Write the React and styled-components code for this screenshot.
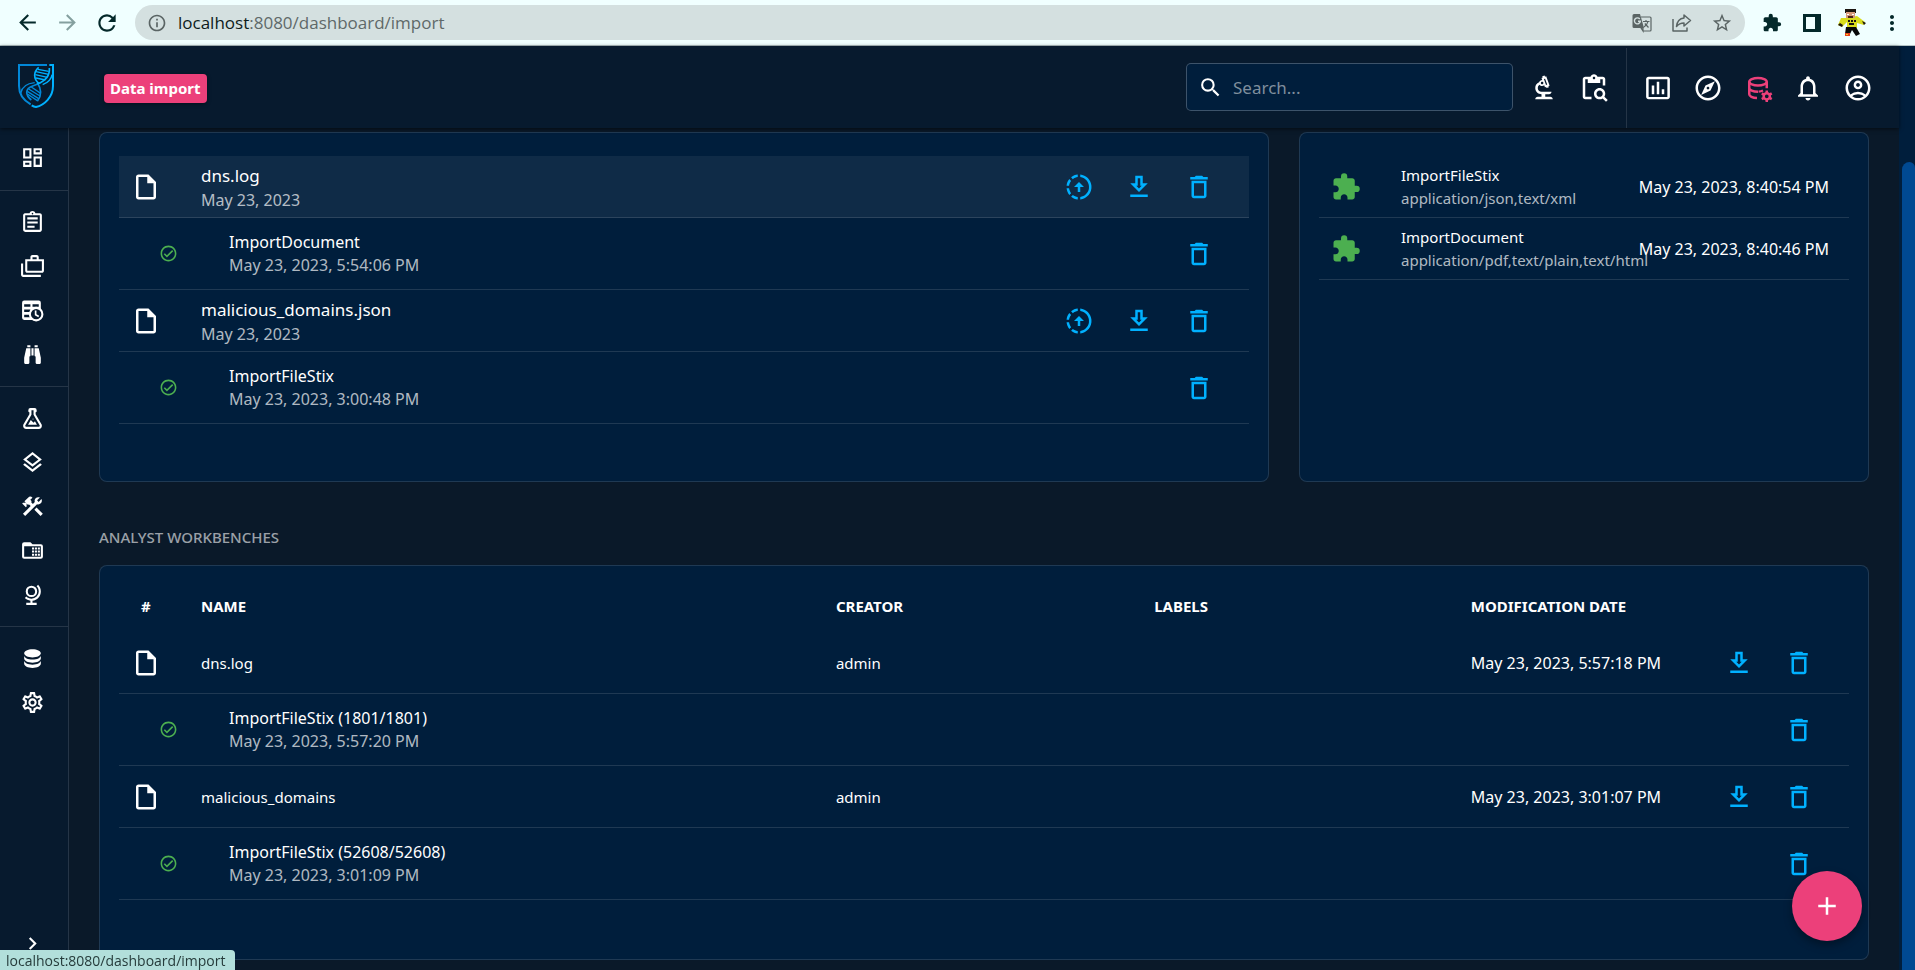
import React from 'react';
import styled, { createGlobalStyle, css } from 'styled-components';
import {
  MdArrowBack, MdArrowForward, MdRefresh, MdInfoOutline, MdStarOutline, MdExtension, MdMoreVert,
  MdSearch, MdOutlineBiotech, MdOutlineContentPasteSearch, MdInsertChartOutlined, MdOutlineExplore,
  MdNotificationsNone, MdOutlineAccountCircle, MdOutlineDashboard, MdOutlineAssignment, MdOutlineCases,
  MdOutlineLayers, MdConstruction, MdOutlineSettings, MdChevronRight, MdOutlineInsertDriveFile,
  MdDeleteOutline, MdOutlineGetApp, MdAdd,
} from 'react-icons/md';

const color = {
  page: '#0a1929',
  nav: '#071a2e',
  paper: '#001e3c',
  line: 'rgba(255, 255, 255, 0.12)',
  blue: '#00b1ff',
  pink: '#ec407a',
  green: '#4caf50',
  muted: 'rgba(255, 255, 255, 0.7)',
};

const GlobalStyle = createGlobalStyle`
  *, *::before, *::after { box-sizing: border-box; }
  body {
    margin: 0;
    background: ${color.page};
    color: #fff;
    font: 16px/24px "Noto Sans", "Open Sans", sans-serif;
  }
  button { padding: 0; border: 0; background: none; color: inherit; font: inherit; cursor: pointer; }
  h1, h2, p, ul { margin: 0; padding: 0; }
  ul { list-style: none; }
  svg { display: block; flex: none; }
`;

/* ---------- browser frame ---------- */

const Window = styled.div`
  display: flex;
  flex-direction: column;
  height: 100vh;
  overflow: hidden;
`;

const BrowserBar = styled.div`
  display: flex;
  align-items: center;
  flex: none;
  height: 46px;
  padding: 0 3px 0 11px;
  background: #f0ffff;
  border-bottom: 1px solid #b4c4c6;
  color: #04292a;
`;

const BrowserNav = styled.div`
  display: flex;
  gap: 8px;
  margin-right: 12px;
`;

const BrowserButton = styled.button`
  display: flex;
  align-items: center;
  justify-content: center;
  width: ${(p) => (p.$wide ? 40 : 32)}px;
  height: 32px;
  color: ${(p) => (p.$faded ? '#84a09f' : 'inherit')};
`;

const AddressBar = styled.div`
  display: flex;
  align-items: center;
  flex: 1;
  height: 35px;
  padding: 0 3px 0 12px;
  border-radius: 18px;
  background: #d4e0e0;
  color: #5a6464;
`;

const Address = styled.p`
  flex: 1;
  margin-left: 11px;
  color: #5f6969;
  font: 17px/24px "Open Sans", "Noto Sans", sans-serif;
  span { color: #0d1b1b; }
`;

const BrowserActions = styled.div`
  display: flex;
  margin-left: 7px;
`;

const Viewport = styled.div`
  display: flex;
  flex: 1;
  min-height: 0;
`;

const ScrollTrack = styled.div`
  flex: none;
  width: 16px;
  padding: 116px 0 0 3px;
  background: ${color.paper};
`;

const ScrollThumb = styled.div`
  height: 100%;
  border-radius: 8px 6px 0 0;
  background: #004991;
`;

const StatusBubble = styled.div`
  position: fixed;
  left: 0;
  bottom: 0;
  padding: 2px 10px 0 6px;
  border-radius: 0 4px 0 0;
  background: #b2dfdb;
  color: #263c3b;
  font: 14px/18px "Open Sans", "Noto Sans", sans-serif;
`;

/* ---------- application frame ---------- */

const AppFrame = styled.div`
  display: flex;
  flex-direction: column;
  flex: 1;
  min-width: 0;
`;

const TopBar = styled.header`
  position: relative;
  display: flex;
  align-items: center;
  flex: none;
  height: 82px;
  padding: 2px 16px 0 18px;
  background: ${color.nav};
  box-shadow: 0 1px 4px rgba(0, 0, 0, 0.6);
`;

const LogoLink = styled.a`
  display: block;
  margin: 0 50px 4px 0;
`;

const PageBadge = styled.h1`
  padding: 0 6px;
  border-radius: 4px;
  background: ${color.pink};
  box-shadow: 0 1px 4px rgba(0, 0, 0, 0.4);
  font-size: 15px;
  font-weight: 700;
  line-height: 29px;
`;

const SearchBox = styled.label`
  display: flex;
  align-items: center;
  gap: 10px;
  width: 327px;
  height: 48px;
  margin: 0 6px 2px auto;
  padding: 0 11px;
  border: 1px solid rgba(255, 255, 255, 0.24);
  border-radius: 5px;
  background: ${color.paper};
`;

const SearchInput = styled.input`
  flex: 1;
  min-width: 0;
  padding: 2px 0 0;
  border: 0;
  outline: 0;
  background: none;
  color: #fff;
  font: inherit;
  font-size: 17px;
  &::placeholder { color: #7f8e9d; opacity: 1; }
`;

const BarGroup = styled.nav`
  display: flex;
  align-items: center;
  align-self: stretch;
  ${(p) => p.$divided && css`
    margin-left: 7px;
    padding-left: 6px;
    border-left: 1px solid ${color.line};
  `}
`;

const BarButton = styled.button`
  display: flex;
  align-items: center;
  justify-content: center;
  width: 50px;
  height: 50px;
  color: ${(p) => (p.$active ? color.pink : '#fff')};
`;

const Body = styled.div`
  display: flex;
  flex: 1;
  min-height: 0;
`;

const SideBar = styled.nav`
  display: flex;
  flex-direction: column;
  flex: none;
  width: 69px;
  padding-bottom: 5px;
  border-right: 1px solid ${color.line};
  background: ${color.nav};
`;

const SideSection = styled.ul`
  padding: ${(p) => (p.$first ? '7px 0 11px' : '9px 0 10px')};
  &:not(:last-of-type) { border-bottom: 1px solid ${color.line}; }
`;

const SideButton = styled.button`
  display: flex;
  align-items: center;
  justify-content: center;
  width: 65px;
  height: 44px;
`;

const SideFooter = styled.div`
  margin-top: auto;
`;

/* ---------- content ---------- */

const Content = styled.main`
  flex: 1;
  min-width: 0;
  padding: 4px 30px 0;
  overflow: hidden;
`;

const Columns = styled.div`
  display: grid;
  grid-template-columns: repeat(12, minmax(0, 1fr));
  gap: 30px;
`;

const Card = styled.section`
  grid-column: span ${(p) => p.$span || 12};
  min-height: ${(p) => p.$minHeight}px;
  padding: ${(p) => p.$top}px 19px 0;
  border: 1px solid ${color.line};
  border-radius: 8px;
  background: ${color.paper};
`;

const SectionTitle = styled.h2`
  margin: 43px 0 16px;
  color: rgba(255, 255, 255, 0.6);
  font-size: 15px;
  font-weight: 500;
  line-height: 24px;
`;

const Row = styled.li`
  display: flex;
  align-items: center;
  height: ${(p) => (p.$nested ? 72 : 62)}px;
  padding: 0 20px 0 ${(p) => (p.$nested ? 40 : 12)}px;
  border-bottom: 1px solid ${color.line};
  background: ${(p) => (p.$selected ? 'rgba(255, 255, 255, 0.06)' : 'none')};
`;

const RowIcon = styled.span`
  flex: none;
  width: 70px;
  color: ${(p) => (p.$green ? color.green : '#fff')};
`;

const RowText = styled.div`
  flex: 1;
  min-width: 0;
  padding-top: ${(p) => (p.$large ? 2 : 0)}px;
  white-space: nowrap;
`;

const Title = styled.p`
  font-size: ${(p) => (p.$large ? 17 : p.$small ? 15 : 16)}px;
  line-height: ${(p) => (p.$large ? 24 : 23)}px;
`;

const Detail = styled.p`
  color: ${color.muted};
  font-size: ${(p) => (p.$small ? 15 : 16)}px;
  line-height: ${(p) => (p.$large ? 24 : 23)}px;
`;

const RowDate = styled.time`
  flex: none;
`;

const ActionButton = styled.button`
  display: flex;
  align-items: center;
  justify-content: center;
  width: 60px;
  height: 48px;
  color: ${color.blue};
`;

const Table = styled.table`
  width: 100%;
  border-collapse: separate;
  border-spacing: 0;
  table-layout: fixed;
`;

const HeadCell = styled.th`
  width: ${(p) => p.$width || 'auto'};
  height: 53px;
  padding: 0;
  font-size: 15px;
  font-weight: 700;
  text-align: left;
  white-space: nowrap;
  &:first-child { padding-left: 22px; }
`;

const TableRow = styled.tr`
  height: ${(p) => (p.$nested ? 72 : 62)}px;
`;

const Cell = styled.td`
  padding: 0 0 0 ${(p) => p.$indent || 0}px;
  border-bottom: 1px solid ${color.line};
  font-size: ${(p) => (p.$date ? 16 : 15)}px;
`;

const NestedEntry = styled.div`
  display: flex;
  align-items: center;
`;

const AddButton = styled.button`
  position: fixed;
  right: 53px;
  bottom: 29px;
  display: flex;
  align-items: center;
  justify-content: center;
  width: 70px;
  height: 70px;
  border-radius: 50%;
  background: ${color.pink};
  box-shadow: 0 4px 8px rgba(0, 0, 0, 0.35);
`;

/* ---------- drawings ---------- */

const Glyph = ({ size = 25, children }) => (
  <svg width={size} height={size} viewBox="0 0 24 24" fill="currentColor" aria-hidden="true">{children}</svg>
);

const Binoculars = () => (
  <Glyph><path d="M11,6H13V13H11V6M9,20A1,1 0 0,1 8,21H5A1,1 0 0,1 4,20V15L6,6H10V13A1,1 0 0,1 9,14V20M10,5H7V3H10V5M15,20V14A1,1 0 0,1 14,13V6H18L20,15V20A1,1 0 0,1 19,21H16A1,1 0 0,1 15,20M14,5V3H17V5H14Z" /></Glyph>
);

const Flask = () => (
  <Glyph><path d="M5,19A1,1 0 0,0 6,20H18A1,1 0 0,0 19,19C19,18.79 18.93,18.59 18.82,18.43L13,8.35V4H11V8.35L5.18,18.43C5.07,18.59 5,18.79 5,19M6,22A3,3 0 0,1 3,19C3,18.4 3.18,17.84 3.5,17.37L9,7.81V6A1,1 0 0,1 8,5V4A2,2 0 0,1 10,2H14A2,2 0 0,1 16,4V5A1,1 0 0,1 15,6V7.81L20.5,17.37C20.82,17.84 21,18.4 21,19A3,3 0 0,1 18,22H6M13,16L14.34,14.66L16.27,18H7.73L10.39,13.39L13,16M12.5,12A0.5,0.5 0 0,1 13,12.5A0.5,0.5 0 0,1 12.5,13A0.5,0.5 0 0,1 12,12.5A0.5,0.5 0 0,1 12.5,12Z" /></Glyph>
);

const TableClock = () => (
  <Glyph>
    <path fillRule="evenodd" d="M4 2.500H18A2 2 0 0 1 20 4.500V19A2 2 0 0 1 18 21H4A2 2 0 0 1 2 19V4.500A2 2 0 0 1 4 2.500ZM4 6V8.500H10V6ZM12 6V8.500H18V6ZM4 11V13.500H10V11ZM4 16V18.500H10V16Z" />
    <circle cx="15.5" cy="15.5" r="6" fill={color.nav} stroke="currentColor" strokeWidth="2" />
    <path d="M15 12V16L18 17.800" fill="none" stroke="currentColor" strokeWidth="1.6" />
  </Glyph>
);

const FolderTable = () => (
  <Glyph>
    <path fillRule="evenodd" d="M4 4H10L12 6H20A2 2 0 0 1 22 8V18A2 2 0 0 1 20 20H4A2 2 0 0 1 2 18V6A2 2 0 0 1 4 4ZM4 8V18H20V8Z" />
    <path d="M11.5 9h2v2h-2zM14.3 9h2v2h-2zM17.1 9h2v2h-2zM11.5 12h2v2h-2zM14.3 12h2v2h-2zM17.1 12h2v2h-2zM11.5 15h2v2h-2zM14.3 15h2v2h-2zM17.1 15h2v2h-2z" />
  </Glyph>
);

const GlobeModel = () => (
  <Glyph><path d="M17.36,2.64L15.95,4.06C17.26,5.37 18,7.14 18,9A7,7 0 0,1 11,16C9.15,16 7.37,15.26 6.06,13.95L4.64,15.36C6.08,16.8 7.97,17.71 10,17.93V20H6V22H16V20H12V17.94C16.55,17.43 20,13.58 20,9C20,6.62 19.05,4.33 17.36,2.64M11,3.5A5.5,5.5 0 0,0 5.5,9A5.5,5.5 0 0,0 11,14.5A5.5,5.5 0 0,0 16.5,9A5.5,5.5 0 0,0 11,3.5M11,5.5C12.94,5.5 14.5,7.07 14.5,9A3.5,3.5 0 0,1 11,12.5A3.5,3.5 0 0,1 7.5,9A3.5,3.5 0 0,1 11,5.5Z" /></Glyph>
);

const Database = () => (
  <Glyph><path d="M12,3C7.58,3 4,4.79 4,7C4,9.21 7.58,11 12,11C16.42,11 20,9.21 20,7C20,4.79 16.42,3 12,3M4,9V12C4,14.21 7.58,16 12,16C16.42,16 20,14.21 20,12V9C20,11.21 16.42,13 12,13C7.58,13 4,11.21 4,9M4,14V17C4,19.21 7.58,21 12,21C16.42,21 20,19.21 20,17V14C20,16.21 16.42,18 12,18C7.58,18 4,16.21 4,14Z" /></Glyph>
);

const ProgressUpload = () => (
  <Glyph size={30}><path d="M13,2.03V4.05C17.39,4.59 20.5,8.58 19.96,12.97C19.5,16.61 16.64,19.5 13,19.93V21.93C18.5,21.38 22.5,16.5 21.95,11C21.5,6.25 17.73,2.5 13,2.03M11,2.06C9.05,2.25 7.19,3 5.67,4.26L7.1,5.74C8.22,4.84 9.57,4.26 11,4.06V2.06M4.26,5.67C3,7.19 2.25,9.04 2.05,11H4.05C4.24,9.58 4.8,8.23 5.69,7.1L4.26,5.67M2.06,13C2.26,14.96 3.03,16.81 4.27,18.33L5.69,16.9C4.81,15.77 4.24,14.42 4.06,13H2.06M7.1,18.37L5.67,19.74C7.18,21 9.04,21.79 11,22V20C9.58,19.82 8.23,19.25 7.1,18.37M12,8L8,12H11V16H13V12H16L12,8Z" /></Glyph>
);

const CheckCircle = () => (
  <Glyph size={19}><path d="M12 2C6.5 2 2 6.5 2 12S6.5 22 12 22 22 17.5 22 12 17.5 2 12 2M12 20C7.59 20 4 16.41 4 12S7.59 4 12 4 20 7.59 20 12 16.41 20 12 20M16.59 7.58L10 14.17L7.41 11.59L6 13L10 17L18 9L16.59 7.58Z" /></Glyph>
);

const cogTeeth = [0, 60, 120, 180, 240, 300];

const DatabaseCog = () => (
  <Glyph size={30}>
    <g fill="none" stroke="currentColor" strokeWidth="2">
      <ellipse cx="12" cy="7" rx="7" ry="3" />
      <path d="M5 7V17C5 18.5 7.6 19.9 11.2 20M19 7V12.2M5 12C5 13.6 8 15 12 15" />
      <path d="M12.5 14.9C14 14.8 15 14.5 16 14" />
      <circle cx="19" cy="18.6" r="2.5" />
    </g>
    {cogTeeth.map((a) => <rect key={a} x="18" y="14" width="2" height="2" transform={`rotate(${a} 19 18.6)`} />)}
  </Glyph>
);

const Logo = () => (
  <svg width="36" height="44" viewBox="0 0 108 132" fill="none" aria-hidden="true">
    <g stroke="#0288d8" strokeWidth="6">
      <path d="M87 3H3V66C3 92 18 110 38 121" />
      <path d="M8 88C12 66 28 58 50 56" strokeWidth="4" />
      <path d="M40 108C22 94 20 74 44 66C56 62 62 58 66 56" strokeWidth="5" />
      <path d="M58 56C70 74 72 94 58 112" strokeWidth="5" />
      <path d="M28 82L62 104M28 90L58 110M32 75L66 96M40 69L68 88" strokeWidth="4" />
    </g>
    <g stroke="#00b1ff" strokeWidth="6">
      <path d="M94 3H105V66C105 100 78 124 54 129C48 128 46 127 41 124" />
      <path d="M102 32C100 48 90 56 74 62" strokeWidth="4" />
      <path d="M94 12C96 36 84 50 58 60" strokeWidth="5" />
      <path d="M62 10C46 24 46 44 62 58" strokeWidth="5" />
      <path d="M60 16L92 22M54 23L92 31M52 32L88 40M54 42L82 48" strokeWidth="4" />
    </g>
  </svg>
);

const Translate = () => (
  <svg width="20" height="20" viewBox="0 0 20 20" aria-hidden="true">
    <path d="M9 4H18A1 1 0 0 1 19 5V17A1 1 0 0 1 18 18H11" fill="none" stroke="currentColor" strokeWidth="1.2" />
    <path d="M2 1H8L12 15H2A1.5 1.5 0 0 1 0.500 13.500V2.500A1.500 1.500 0 0 1 2 1Z" fill="currentColor" />
    <path d="M7.800 6A3 3 0 1 0 8.400 8.200H6" fill="none" stroke="#d4e0e0" strokeWidth="1.4" />
    <path d="M11 8.500H17.500M14 7V8.500M16 8.500C15.500 11 14 12.500 12 14M12.800 10.500L16.500 14.500M9 15L11 18V15Z" fill="none" stroke="currentColor" strokeWidth="1.200" />
  </svg>
);

const Share = () => (
  <svg width="20" height="20" viewBox="0 0 20 20" fill="none" stroke="currentColor" strokeWidth="1.5" strokeLinejoin="round" aria-hidden="true">
    <path d="M1 6V18H15V14.500" />
    <path d="M12 2L18.500 7.500L12 13V10C8.500 10 6.500 11 4.500 13.500C5 9 7.500 5.500 12 5Z" />
  </svg>
);

const SidePanel = () => (
  <svg width="18" height="18" viewBox="0 0 18 18" aria-hidden="true">
    <path fill="currentColor" fillRule="evenodd" d="M0 0H18V18H0ZM3 3V15H12V3Z" />
  </svg>
);

const Avatar = () => (
  <svg width="28" height="28" viewBox="0 0 28 28" aria-hidden="true">
    <path fill="#d9dc1c" d="M8 9L19 7L27 13L26 16L19 14V19H9V13L4 18L0 16L3 9Z" />
    <path fill="#1b1510" d="M7 0H18V4H7ZM10 11H12V13H10ZM13 11H15V13H13ZM16 11H18V13H16ZM11 14H16V16H11ZM2 14L5 16L4 18L0 16ZM24 12L28 14L26 16Z" />
    <path fill="#d59a7c" d="M8 3H17V9H8Z" />
    <path fill="#fff" d="M9 5H11V6H9ZM14 5H16V6H14Z" />
    <path fill="#4a2418" d="M10 7H15V9H10Z" />
    <path fill="#080808" d="M8 18H18L22 25L18 27L14 21L12 25H7Z" />
    <path fill="#e5401c" d="M7 24H12V27H7Z" />
    <path fill="#f4cf1d" d="M8 25H10V26H8Z" />
  </svg>
);

/* ---------- data ---------- */

const sideSections = [
  [['Dashboard', <MdOutlineDashboard size={25} />]],
  [
    ['Analyses', <MdOutlineAssignment size={25} />],
    ['Cases', <MdOutlineCases size={25} />],
    ['Events', <TableClock />],
    ['Observations', <Binoculars />],
  ],
  [
    ['Threats', <Flask />],
    ['Arsenal', <MdOutlineLayers size={25} />],
    ['Techniques', <MdConstruction size={25} />],
    ['Entities', <FolderTable />],
    ['Locations', <GlobeModel />],
  ],
  [
    ['Data', <Database />],
    ['Settings', <MdOutlineSettings size={25} />],
  ],
];

const uploads = [
  { name: 'dns.log', date: 'May 23, 2023', selected: true, job: 'ImportDocument', jobDate: 'May 23, 2023, 5:54:06 PM' },
  { name: 'malicious_domains.json', date: 'May 23, 2023', job: 'ImportFileStix', jobDate: 'May 23, 2023, 3:00:48 PM' },
];

const connectors = [
  { name: 'ImportFileStix', types: 'application/json,text/xml', date: 'May 23, 2023, 8:40:54 PM' },
  { name: 'ImportDocument', types: 'application/pdf,text/plain,text/html', date: 'May 23, 2023, 8:40:46 PM' },
];

const workbenches = [
  { name: 'dns.log', creator: 'admin', date: 'May 23, 2023, 5:57:18 PM', job: 'ImportFileStix (1801/1801)', jobDate: 'May 23, 2023, 5:57:20 PM' },
  { name: 'malicious_domains', creator: 'admin', date: 'May 23, 2023, 3:01:07 PM', job: 'ImportFileStix (52608/52608)', jobDate: 'May 23, 2023, 3:01:09 PM' },
];

/* ---------- parts ---------- */

const Delete = () => <ActionButton aria-label="Delete"><MdDeleteOutline size={30} /></ActionButton>;
const Download = () => <ActionButton aria-label="Download"><MdOutlineGetApp size={30} /></ActionButton>;

const Browser = () => (
  <BrowserBar>
    <BrowserNav>
      <BrowserButton aria-label="Back"><MdArrowBack size={25} /></BrowserButton>
      <BrowserButton aria-label="Forward" $faded><MdArrowForward size={25} /></BrowserButton>
      <BrowserButton aria-label="Reload"><MdRefresh size={26} /></BrowserButton>
    </BrowserNav>
    <AddressBar>
      <MdInfoOutline size={20} />
      <Address><span>localhost</span>:8080/dashboard/import</Address>
      <BrowserButton $wide aria-label="Translate"><Translate /></BrowserButton>
      <BrowserButton $wide aria-label="Share"><Share /></BrowserButton>
      <BrowserButton $wide aria-label="Bookmark"><MdStarOutline size={22} /></BrowserButton>
    </AddressBar>
    <BrowserActions>
      <BrowserButton $wide aria-label="Extensions"><MdExtension size={20} /></BrowserButton>
      <BrowserButton $wide aria-label="Side panel"><SidePanel /></BrowserButton>
      <BrowserButton $wide aria-label="Profile"><Avatar /></BrowserButton>
      <BrowserButton $wide aria-label="Menu"><MdMoreVert size={24} /></BrowserButton>
    </BrowserActions>
  </BrowserBar>
);

const Header = () => (
  <TopBar>
    <LogoLink href="#home" aria-label="Home"><Logo /></LogoLink>
    <PageBadge>Data import</PageBadge>
    <SearchBox>
      <MdSearch size={25} />
      <SearchInput placeholder="Search..." aria-label="Search" />
    </SearchBox>
    <BarGroup>
      <BarButton aria-label="Advanced search"><MdOutlineBiotech size={30} /></BarButton>
      <BarButton aria-label="Bulk search"><MdOutlineContentPasteSearch size={30} /></BarButton>
    </BarGroup>
    <BarGroup $divided>
      <BarButton aria-label="Dashboards"><MdInsertChartOutlined size={30} /></BarButton>
      <BarButton aria-label="Investigations"><MdOutlineExplore size={30} /></BarButton>
      <BarButton aria-label="Data import" $active><DatabaseCog /></BarButton>
      <BarButton aria-label="Notifications"><MdNotificationsNone size={30} /></BarButton>
      <BarButton aria-label="Profile"><MdOutlineAccountCircle size={30} /></BarButton>
    </BarGroup>
  </TopBar>
);

const Navigation = () => (
  <SideBar>
    {sideSections.map((items, i) => (
      <SideSection key={items[0][0]} $first={i === 0}>
        {items.map(([label, icon]) => (
          <li key={label}><SideButton aria-label={label}>{icon}</SideButton></li>
        ))}
      </SideSection>
    ))}
    <SideFooter>
      <SideButton aria-label="Expand"><MdChevronRight size={25} /></SideButton>
    </SideFooter>
  </SideBar>
);

const Uploads = () => (
  <Card $span={8} $minHeight={350} $top={23}>
    <ul>
      {uploads.map((file) => (
        <React.Fragment key={file.name}>
          <Row $selected={file.selected}>
            <RowIcon><MdOutlineInsertDriveFile size={30} /></RowIcon>
            <RowText $large>
              <Title $large>{file.name}</Title>
              <Detail $large>{file.date}</Detail>
            </RowText>
            <ActionButton aria-label="Launch import"><ProgressUpload /></ActionButton>
            <Download />
            <Delete />
          </Row>
          <Row $nested>
            <RowIcon $green><CheckCircle /></RowIcon>
            <RowText>
              <Title>{file.job}</Title>
              <Detail>{file.jobDate}</Detail>
            </RowText>
            <Delete />
          </Row>
        </React.Fragment>
      ))}
    </ul>
  </Card>
);

const Connectors = () => (
  <Card $span={4} $minHeight={350} $top={23}>
    <ul>
      {connectors.map((c) => (
        <Row key={c.name}>
          <RowIcon $green><MdExtension size={30} /></RowIcon>
          <RowText>
            <Title $small>{c.name}</Title>
            <Detail $small>{c.types}</Detail>
          </RowText>
          <RowDate>{c.date}</RowDate>
        </Row>
      ))}
    </ul>
  </Card>
);

const Workbenches = () => (
  <Card as="div" $minHeight={395} $top={13}>
    <Table>
      <thead>
        <tr>
          <HeadCell $width="82px">#</HeadCell>
          <HeadCell $width="36.7%">NAME</HeadCell>
          <HeadCell $width="18.4%">CREATOR</HeadCell>
          <HeadCell $width="18.3%">LABELS</HeadCell>
          <HeadCell>MODIFICATION DATE</HeadCell>
          <HeadCell $width="60px" aria-label="Download" />
          <HeadCell $width="80px" aria-label="Delete" />
        </tr>
      </thead>
      <tbody>
        {workbenches.map((w) => (
          <React.Fragment key={w.name}>
            <TableRow>
              <Cell $indent={12}><MdOutlineInsertDriveFile size={30} /></Cell>
              <Cell>{w.name}</Cell>
              <Cell>{w.creator}</Cell>
              <Cell />
              <Cell $date>{w.date}</Cell>
              <Cell><Download /></Cell>
              <Cell><Delete /></Cell>
            </TableRow>
            <TableRow $nested>
              <Cell colSpan={6} $indent={40}>
                <NestedEntry>
                  <RowIcon $green><CheckCircle /></RowIcon>
                  <RowText>
                    <Title>{w.job}</Title>
                    <Detail>{w.jobDate}</Detail>
                  </RowText>
                </NestedEntry>
              </Cell>
              <Cell><Delete /></Cell>
            </TableRow>
          </React.Fragment>
        ))}
      </tbody>
    </Table>
  </Card>
);

export default function App() {
  return (
    <>
      <GlobalStyle />
      <Window>
        <Browser />
        <Viewport>
          <AppFrame>
            <Header />
            <Body>
              <Navigation />
              <Content>
                <Columns>
                  <Uploads />
                  <Connectors />
                </Columns>
                <SectionTitle>ANALYST WORKBENCHES</SectionTitle>
                <Workbenches />
              </Content>
            </Body>
          </AppFrame>
          <ScrollTrack><ScrollThumb /></ScrollTrack>
        </Viewport>
      </Window>
      <AddButton aria-label="Add"><MdAdd size={30} /></AddButton>
      <StatusBubble>localhost:8080/dashboard/import</StatusBubble>
    </>
  );
}
